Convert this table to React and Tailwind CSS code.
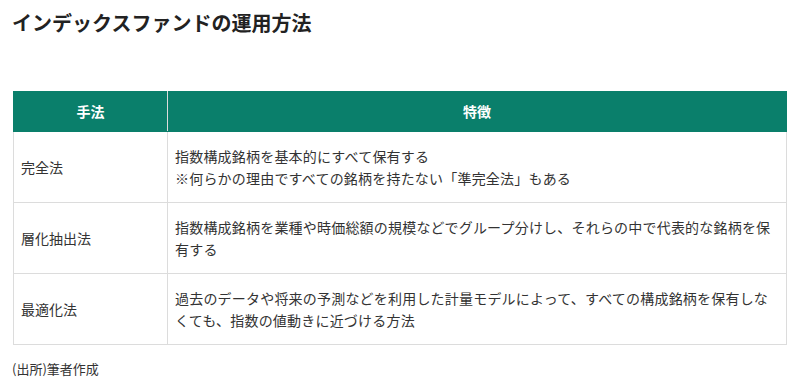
import React from 'react';

const rows = [
  {
    method: '完全法',
    lines: ['指数構成銘柄を基本的にすべて保有する', '※何らかの理由ですべての銘柄を持たない「準完全法」もある'],
  },
  {
    method: '層化抽出法',
    lines: ['指数構成銘柄を業種や時価総額の規模などでグループ分けし、それらの中で代表的な銘柄を保有する'],
  },
  {
    method: '最適化法',
    lines: ['過去のデータや将来の予測などを利用した計量モデルによって、すべての構成銘柄を保有しなくても、指数の値動きに近づける方法'],
  },
];

const App = () => {
  return (
    <div
      className="w-[800px] h-[387px] bg-white text-[#333] overflow-hidden"
      style={{ fontFamily: '"Noto Sans CJK JP", "Noto Sans", sans-serif' }}
    >
      <h2 className="pl-3 pt-[9px] text-[20px] leading-[28px] font-bold text-[#222]">
        インデックスファンドの運用方法
      </h2>

      <div className="pl-[13px] pt-[54px]">
        <table className="w-[774px] border-collapse text-[14px]">
          <thead>
            <tr className="bg-[#0a7f6b] text-white">
              <th className="w-[154px] h-[40px] border border-[#0a7f6b] border-r-[#dcdcdc] font-bold text-center">手法</th>
              <th className="h-[40px] border border-[#0a7f6b] font-bold text-center">特徴</th>
            </tr>
          </thead>
          <tbody>
            {rows.map((row) => (
              <tr key={row.method} className="h-[71px]">
                <td className="border border-[#dcdcdc] px-[7px] align-middle leading-[22px]">{row.method}</td>
                <td className="border border-[#dcdcdc] pl-[7px] pr-[13px] py-[13px] align-middle leading-[22px] tracking-[0.2px]">
                  {row.lines.map((line) => (
                    <div key={line}>{line}</div>
                  ))}
                </td>
              </tr>
            ))}
          </tbody>
        </table>
      </div>

      <p className="pl-3 pt-[14px] text-[13px] leading-[20px]">(出所)筆者作成</p>
    </div>
  );
};

export default App;
